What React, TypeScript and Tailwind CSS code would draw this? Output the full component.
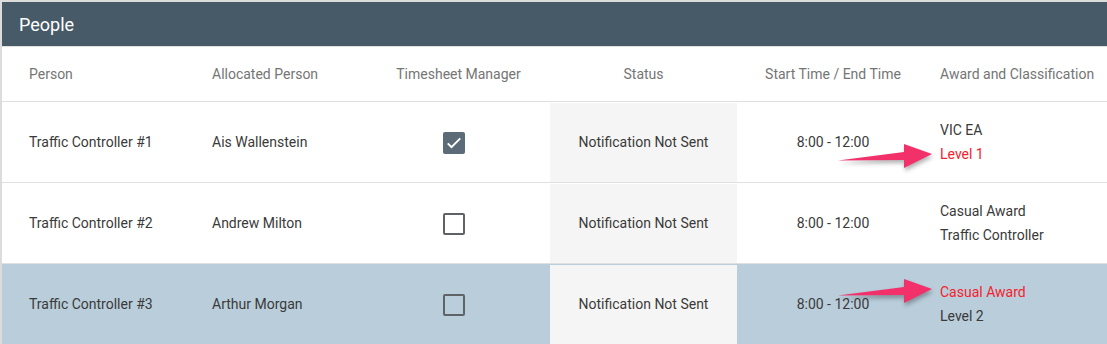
import React from "react";

type Row = {
  person: string;
  allocated: string;
  manager: boolean;
  status: string;
  time: string;
  award: string;
  classification: string;
  redLine?: 0 | 1;
  selected?: boolean;
};

const rows: Row[] = [
  {
    person: "Traffic Controller #1",
    allocated: "Ais Wallenstein",
    manager: true,
    status: "Notification Not Sent",
    time: "8:00 - 12:00",
    award: "VIC EA",
    classification: "Level 1",
    redLine: 1,
  },
  {
    person: "Traffic Controller #2",
    allocated: "Andrew Milton",
    manager: false,
    status: "Notification Not Sent",
    time: "8:00 - 12:00",
    award: "Casual Award",
    classification: "Traffic Controller",
  },
  {
    person: "Traffic Controller #3",
    allocated: "Arthur Morgan",
    manager: false,
    status: "Notification Not Sent",
    time: "8:00 - 12:00",
    award: "Casual Award",
    classification: "Level 2",
    redLine: 0,
    selected: true,
  },
];

const cols = "grid grid-cols-[183px_182px_183px_187px_192px_1fr]";

function Checkbox({ checked }: { checked: boolean }) {
  if (checked) {
    return (
      <span className="flex h-[22px] w-[22px] items-center justify-center rounded-[2px] bg-[#5b6b77]">
        <svg width="20" height="20" viewBox="0 0 24 24" fill="none">
          <path d="M4.5 12.5l4.5 4.5L19.5 6.5" stroke="white" strokeWidth="2.4" />
        </svg>
      </span>
    );
  }
  return <span className="block h-[22px] w-[22px] rounded-[2px] border-2 border-[#5f6368]" />;
}

// annotation arrow, tail at left, pointing right
function Arrow({ className }: { className: string }) {
  return (
    <svg
      className={`pointer-events-none absolute ${className}`}
      width="100"
      height="32"
      viewBox="0 0 100 32"
      style={{ filter: "drop-shadow(1px 3px 2px rgba(0,0,0,0.3))" }}
    >
      <polygon points="0,18.5 66,10 66,2 94,12 66,26 66,18" fill="#f2306a" />
    </svg>
  );
}

export default function App() {
  return (
    <div className="h-[344px] w-[1107px] overflow-hidden bg-white font-['Roboto',sans-serif]">
      <div className="relative border-l-2 border-t-2 border-[#dcdcdc]">
        <div className="flex h-[44px] items-center bg-[#475a68] pl-[17px] text-[18px] text-white">People</div>
        <div className={`${cols} h-[56px] items-center border-y border-[#e0e0e0] pt-[1px] text-[14px] text-[#757575]`}>
          <div className="pl-[27px]">Person</div>
          <div className="pl-[27px]">Allocated Person</div>
          <div className="text-center">Timesheet Manager</div>
          <div className="text-center">Status</div>
          <div className="text-center">Start Time / End Time</div>
          <div className="pl-[11px]">Award and Classification</div>
        </div>
        {rows.map((r) => (
          <div
            key={r.person}
            className={`${cols} h-[81px] border-b border-[#e0e0e0] pt-[1px] text-[14px] text-[#3a3a3a] ${r.selected ? "bg-[#b9cdda]" : "bg-white"}`}
          >
            <div className="flex items-center pl-[27px]">{r.person}</div>
            <div className="flex items-center pl-[27px]">{r.allocated}</div>
            <div className="flex items-center justify-center pr-[10px]">
              <Checkbox checked={r.manager} />
            </div>
            <div className="flex items-center justify-center bg-[#f5f5f5]">{r.status}</div>
            <div className="flex items-center justify-center">{r.time}</div>
            <div className="flex flex-col justify-center gap-[3px] pl-[11px]">
              <span className={r.redLine === 0 ? "text-[#f5222d]" : ""}>{r.award}</span>
              <span className={r.redLine === 1 ? "text-[#f5222d]" : ""}>{r.classification}</span>
            </div>
          </div>
        ))}
        <Arrow className="left-[836px] top-[140px]" />
        <Arrow className="left-[836px] top-[275px]" />
      </div>
    </div>
  );
}
